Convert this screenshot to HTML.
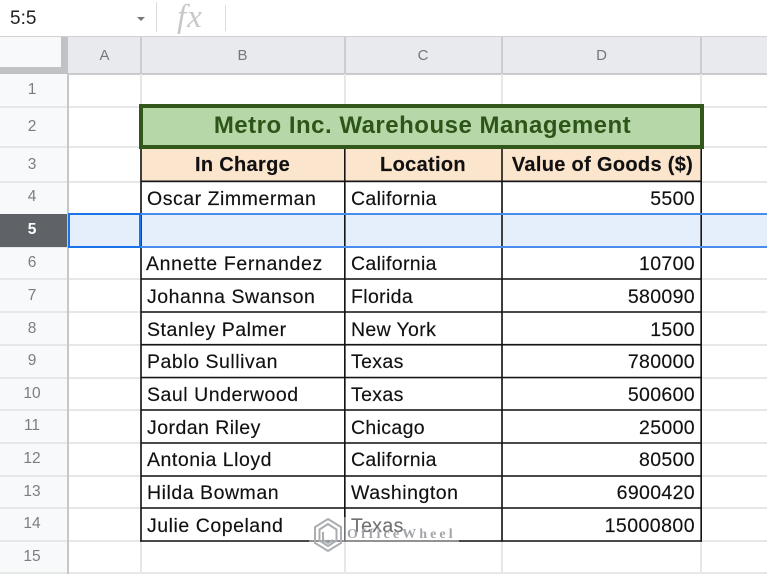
<!DOCTYPE html>
<html><head><meta charset="utf-8">
<style>
html,body{margin:0;padding:0;background:#fff}
#p{position:relative;width:767px;height:574px;overflow:hidden;background:#fff;font-family:"Liberation Sans",sans-serif;color:#111;filter:blur(.3px)}
#p div{position:absolute;box-sizing:border-box}
.ch{top:37px;height:37px;background:#e8eaed;color:#74777c;font-size:15px;line-height:37px;text-align:center}
.rh{left:0;width:64px;color:#7d7d7d;font-size:15.500px;text-align:center}
.rb{left:0;width:68px;background:#f8f9fa}
.h{background:#e6e7e7}
.t{font-size:19.5px;line-height:33px;height:33px;white-space:nowrap;letter-spacing:.35px;-webkit-text-stroke:.15px #111}
.n{letter-spacing:.53px}
.b{font-weight:bold;text-align:center;letter-spacing:.32px;font-size:20px}
.r{text-align:right;width:190px;left:505px}
</style></head><body><div id="p">

<!-- formula bar -->
<div style="left:10px;top:7px;font-size:19px;line-height:23px;color:#222">5:5</div>
<div style="left:137px;top:17px;width:0;height:0;border-left:4px solid transparent;border-right:4px solid transparent;border-top:4px solid #777"></div>
<div style="left:156px;top:2px;width:1px;height:30px;background:#dadce0"></div>
<div style="left:225px;top:5px;width:1px;height:26px;background:#dadce0"></div>
<div style="left:177px;top:0;font-family:'Liberation Serif',serif;font-style:italic;font-size:33px;line-height:35px;letter-spacing:1px;color:#c6c8ca">fx</div>
<div style="left:0;top:36px;width:767px;height:2px;background:#d0d1d3"></div>

<!-- corner & column headers -->
<div class="rb" style="top:37px;height:37px"></div>
<div style="left:61px;top:37px;width:7px;height:37px;background:#c1c2c4"></div>
<div style="left:0;top:67px;width:68px;height:7px;background:#c1c2c4"></div>
<div class="ch" style="left:68px;width:73px">A</div>
<div class="ch" style="left:141px;width:203px">B</div>
<div class="ch" style="left:344px;width:158px">C</div>
<div class="ch" style="left:502px;width:199px">D</div>
<div class="ch" style="left:701px;width:66px"></div>
<div style="left:68px;top:73px;width:699px;height:2px;background:#c9cacc"></div>
<div style="left:140px;top:37px;width:2px;height:37px;background:#cbccce"></div>
<div style="left:344px;top:37px;width:2px;height:37px;background:#cbccce"></div>
<div style="left:501px;top:37px;width:2px;height:37px;background:#cbccce"></div>
<div style="left:700px;top:37px;width:2px;height:37px;background:#cbccce"></div>

<!-- row header column -->
<div class="rb" style="top:74px;height:500px"></div>
<div class="rb" style="top:214px;height:33px;background:#5f6368"></div>

<!-- light grid -->
<div class="h" style="left:0;top:106px;width:767px;height:2px"></div>
<div class="h" style="left:0;top:146px;width:767px;height:2px"></div>
<div class="h" style="left:0;top:181px;width:767px;height:2px"></div>
<div class="h" style="left:0;top:247px;width:767px;height:1px"></div>
<div class="h" style="left:0;top:278px;width:767px;height:2px"></div>
<div class="h" style="left:0;top:311px;width:767px;height:2px"></div>
<div class="h" style="left:0;top:344px;width:767px;height:2px"></div>
<div class="h" style="left:0;top:377px;width:767px;height:2px"></div>
<div class="h" style="left:0;top:409px;width:767px;height:2px"></div>
<div class="h" style="left:0;top:442px;width:767px;height:2px"></div>
<div class="h" style="left:0;top:475px;width:767px;height:2px"></div>
<div class="h" style="left:0;top:507px;width:767px;height:2px"></div>
<div class="h" style="left:0;top:540px;width:767px;height:2px"></div>
<div class="h" style="left:0;top:572px;width:767px;height:2px"></div>
<div class="h" style="left:140px;top:74px;width:2px;height:500px"></div>
<div class="h" style="left:344px;top:74px;width:2px;height:500px"></div>
<div class="h" style="left:501px;top:74px;width:2px;height:500px"></div>
<div class="h" style="left:700px;top:74px;width:2px;height:500px"></div>
<div style="left:67px;top:74px;width:2px;height:500px;background:#c6c7c9"></div>

<!-- row numbers -->
<div class="rh" style="top:74px;height:32px;line-height:32px">1</div>
<div class="rh" style="top:106px;height:42px;line-height:42px">2</div>
<div class="rh" style="top:148px;height:33px;line-height:33px">3</div>
<div class="rh" style="top:181px;height:33px;line-height:31px">4</div>
<div class="rh" style="top:214px;height:33px;line-height:32px;color:#fff;font-weight:bold">5</div>
<div class="rh" style="top:247px;height:32px;line-height:32px">6</div>
<div class="rh" style="top:279px;height:33px;line-height:33px">7</div>
<div class="rh" style="top:312px;height:33px;line-height:33px">8</div>
<div class="rh" style="top:345px;height:33px;line-height:32px">9</div>
<div class="rh" style="top:378px;height:32px;line-height:32px">10</div>
<div class="rh" style="top:410px;height:33px;line-height:32px">11</div>
<div class="rh" style="top:443px;height:33px;line-height:32px">12</div>
<div class="rh" style="top:476px;height:32px;line-height:32px">13</div>
<div class="rh" style="top:508px;height:33px;line-height:32px">14</div>
<div class="rh" style="top:541px;height:32px;line-height:31px">15</div>

<!-- title -->
<div style="left:139px;top:104px;width:565px;height:45px;background:#b6d7a8;border:4px solid #31571b"></div>
<div style="left:142px;top:107px;width:561px;height:40px;line-height:38px;text-align:center;font-size:24px;font-weight:bold;color:#2d5518;letter-spacing:.5px;white-space:nowrap">Metro Inc. Warehouse Management</div>

<!-- column header fill -->
<div style="left:141px;top:149px;width:560px;height:32px;background:#fce5cd"></div>

<!-- row 5 highlight -->
<div style="left:68px;top:214px;width:699px;height:33px;background:#e5eefb"></div>

<!-- table lines -->
<svg style="position:absolute;left:0;top:0" width="767" height="574" fill="none" stroke="#151515" stroke-width="1.600">
<path d="M141 149V541.700M344.800 149V541.700M502 149V541.700M701.200 149V541.700"/>
<path d="M141 181.300H702M141 279H702M141 312H702M141 344.700H702M141 377.500H702M141 410H702M141 443H702M141 476H702M141 508H702M140.200 541H702"/>
</svg>

<!-- selection -->
<div style="left:68px;top:213px;width:699px;height:2px;background:#4a8cec"></div>
<div style="left:68px;top:246px;width:699px;height:2px;background:#4a8cec"></div>
<div style="left:68px;top:213px;width:73px;height:35px;border:2px solid #1a73e8"></div>

<!-- text -->
<div class="t b" style="left:141px;width:203px;top:149px">In Charge</div>
<div class="t b" style="left:344px;width:158px;top:149px">Location</div>
<div class="t b" style="left:503px;width:199px;top:149px">Value of Goods ($)</div>

<div class="t n" style="left:147px;top:183px">Oscar Zimmerman</div><div class="t" style="left:351px;top:183px">California</div><div class="t r" style="top:183px">5500</div>
<div class="t n" style="left:146px;top:248px;letter-spacing:.65px">Annette Fernandez</div><div class="t" style="left:351px;top:248px">California</div><div class="t r" style="top:248px">10700</div>
<div class="t n" style="left:147px;top:281px">Johanna Swanson</div><div class="t" style="left:351px;top:281px">Florida</div><div class="t r" style="top:281px">580090</div>
<div class="t n" style="left:147px;top:314px">Stanley Palmer</div><div class="t" style="left:351px;top:314px">New York</div><div class="t r" style="top:314px">1500</div>
<div class="t n" style="left:147px;top:346px">Pablo Sullivan</div><div class="t" style="left:351px;top:346px">Texas</div><div class="t r" style="top:346px">780000</div>
<div class="t n" style="left:147px;top:379px">Saul Underwood</div><div class="t" style="left:351px;top:379px">Texas</div><div class="t r" style="top:379px">500600</div>
<div class="t n" style="left:147px;top:412px;letter-spacing:.45px">Jordan Riley</div><div class="t" style="left:351px;top:412px">Chicago</div><div class="t r" style="top:412px">25000</div>
<div class="t n" style="left:147px;top:444px">Antonia Lloyd</div><div class="t" style="left:351px;top:444px">California</div><div class="t r" style="top:444px">80500</div>
<div class="t n" style="left:147px;top:477px">Hilda Bowman</div><div class="t n" style="left:351px;top:477px">Washington</div><div class="t r" style="top:477px">6900420</div>
<div class="t n" style="left:147px;top:510px">Julie Copeland</div><div class="t" style="left:351px;top:510px">Texas</div><div class="t r" style="top:510px;letter-spacing:.45px">15000800</div>

<!-- watermark -->
<div style="left:309px;top:517px;width:150px;height:25px;background:rgba(255,255,255,.4)"></div>
<svg style="position:absolute;left:311px;top:517px" width="34" height="36" viewBox="0 0 34 36" fill="none" stroke="#a9adb2" stroke-width="2"><path d="M17 2 30 10V26L17 34 4 26V10Z"/><path d="M17 7 25.500 12.500V23.500L17 29 8.500 23.500V12.500Z"/><path d="M12 15V23L17 26 22 23"/></svg>
<div style="left:347px;top:526px;font-family:'Liberation Serif',serif;font-size:14px;line-height:18px;letter-spacing:3.100px;color:#a2a5a9;font-weight:bold">OfficeWheel</div>

</div></body></html>
